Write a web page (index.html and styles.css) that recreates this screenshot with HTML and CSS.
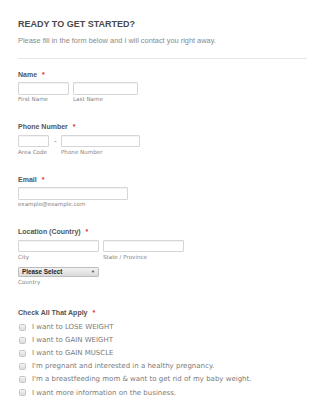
FILE: index.html
```html
<!DOCTYPE html>
<html lang="en">

<head>
    <meta charset="UTF-8">
    <meta name="viewport" content="width=device-width, initial-scale=1.0">
    <title>Ready To Get Started</title>
    <link rel="stylesheet" href="styles.css">
</head>

<body>
    <div class="form">
        <div class="form-header">
            <h2>READY TO GET STARTED?</h2>
            <p>Please fill in the form below and I will contact you right away.</p>
        </div>

        <div class="field">
            <label class="field-label">Name <span class="req">*</span></label>
            <div class="row">
                <div class="sub">
                    <input type="text" class="w-first">
                    <span class="sub-label">First Name</span>
                </div>
                <div class="sub">
                    <input type="text" class="w-last">
                    <span class="sub-label">Last Name</span>
                </div>
            </div>
        </div>

        <div class="field">
            <label class="field-label">Phone Number <span class="req">*</span></label>
            <div class="row">
                <div class="sub">
                    <input type="text" class="w-area">
                    <span class="sub-label">Area Code</span>
                </div>
                <span class="dash">-</span>
                <div class="sub">
                    <input type="text" class="w-phone">
                    <span class="sub-label">Phone Number</span>
                </div>
            </div>
        </div>

        <div class="field">
            <label class="field-label">Email <span class="req">*</span></label>
            <div class="sub">
                <input type="text" class="w-email">
                <span class="sub-label">example@example.com</span>
            </div>
        </div>

        <div class="field field-location">
            <label class="field-label">Location (Country) <span class="req">*</span></label>
            <div class="row">
                <div class="sub">
                    <input type="text" class="w-city">
                    <span class="sub-label">City</span>
                </div>
                <div class="sub">
                    <input type="text" class="w-city">
                    <span class="sub-label">State / Province</span>
                </div>
            </div>
            <div class="sub select-wrap">
                <div class="fake-select">
                    <span>Please Select</span>
                    <span class="arrow">&#9660;</span>
                </div>
                <span class="sub-label">Country</span>
            </div>
        </div>

        <div class="field">
            <label class="field-label">Check All That Apply <span class="req">*</span></label>
            <ul class="checks">
                <li><span class="box"></span>I want to LOSE WEIGHT</li>
                <li><span class="box"></span>I want to GAIN WEIGHT</li>
                <li><span class="box"></span>I want to GAIN MUSCLE</li>
                <li><span class="box"></span>I'm pregnant and interested in a healthy pregnancy.</li>
                <li><span class="box"></span>I'm a breastfeeding mom &amp; want to get rid of my baby weight.</li>
                <li><span class="box"></span>I want more information on the business.</li>
            </ul>
        </div>
    </div>
</body>

</html>
```

FILE: styles.css
```css
body {
    margin: 0;
    padding: 0;
    background-color: #fff;
    font-family: "Liberation Sans", Arial, sans-serif;
}

.form {
    padding: 0 18px;
}

.form-header {
    padding-top: 19px;
    padding-bottom: 13px;
    border-bottom: 1px solid #e6e6e6;
}

.form-header h2 {
    margin: 0;
    font-size: 9px;
    line-height: 11px;
    font-weight: bold;
    color: #4a4a4a;
}

.form-header p {
    margin: 5.5px 0 0;
    font-size: 7.4px;
    line-height: 9px;
    color: #8a8a8a;
}

.field {
    margin-top: 11px;
    margin-bottom: 19px;
}

.field + .field {
    margin-top: 0;
}

.field-location {
    margin-bottom: 22.5px;
}

.field-label {
    display: block;
    font-size: 7px;
    line-height: 9px;
    font-weight: bold;
    color: #555;
    margin-bottom: 3.5px;
}

.req {
    color: #e02b2b;
    margin-left: 3px;
}

.row {
    display: flex;
    gap: 4px;
}

.sub {
    display: flex;
    flex-direction: column;
}

.sub input {
    box-sizing: border-box;
    height: 12.5px;
    margin: 0;
    padding: 0;
    border: 1px solid #d6d6d6;
    box-shadow: inset 0 1px 1px rgba(0, 0, 0, 0.05);
    border-radius: 1px;
    background: #fff;
}

.sub-label {
    margin-top: 1.5px;
    font-family: "DejaVu Sans", Verdana, sans-serif;
    font-size: 5.6px;
    line-height: 7px;
    color: #858585;
}

.w-first { width: 51px; }
.w-last { width: 65px; }
.w-area { width: 31px; }
.w-phone { width: 79px; }
.w-email { width: 110px; }
.w-city { width: 81px; }

.dash {
    width: 3px;
    padding-left: 1px;
    text-align: center;
    font-size: 7px;
    line-height: 12px;
    color: #777;
}

.select-wrap {
    margin-top: 6px;
}

.fake-select {
    box-sizing: border-box;
    width: 81px;
    height: 10.5px;
    display: flex;
    align-items: center;
    justify-content: space-between;
    padding: 0 3px 0 3px;
    border: 1px solid #bdbdbd;
    border-radius: 1px;
    background: linear-gradient(#f2f2f2, #dadada);
    font-size: 6.3px;
    font-weight: bold;
    color: #222;
}

.fake-select .arrow {
    font-size: 4px;
    color: #444;
}

.checks {
    list-style: none;
    margin: 3px 0 0;
    padding: 0;
}

.checks li {
    display: flex;
    align-items: center;
    height: 13.1px;
    font-family: "DejaVu Sans", Verdana, sans-serif;
    font-size: 7px;
    color: #7a7a7a;
    white-space: nowrap;
}

.box {
    box-sizing: border-box;
    width: 7px;
    height: 7px;
    margin: 0 6px 0 1px;
    border: 1px solid #c4c4c4;
    border-radius: 1.5px;
    background: linear-gradient(#f4f4f4, #dcdcdc);
}
```
